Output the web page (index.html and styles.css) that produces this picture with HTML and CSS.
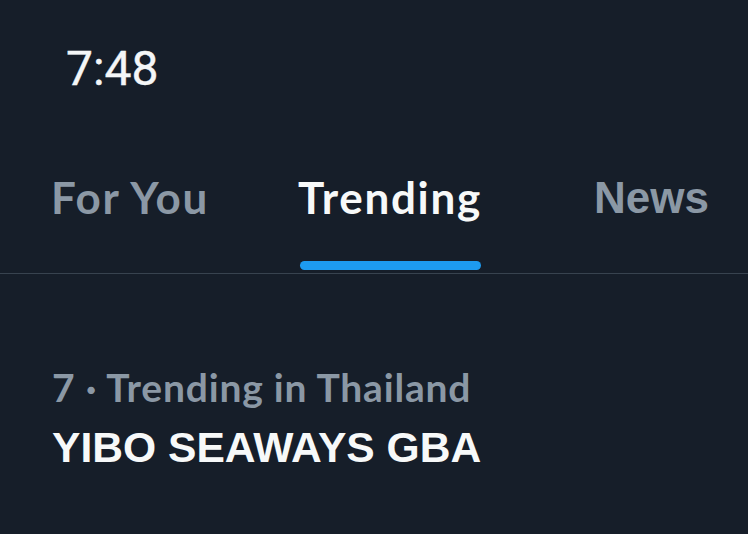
FILE: index.html
```html
<!DOCTYPE html>
<html lang="en">
<head>
<meta charset="utf-8">
<title>Trending</title>
<link rel="stylesheet" href="styles.css">
</head>
<body>
  <div class="screen">
    <header class="status-bar">
      <span class="clock">7:48</span>
    </header>
    <nav class="tabs">
      <div class="tab"><span class="tab-label">For You</span></div>
      <div class="tab tab-active"><span class="tab-label">Trending</span><span class="indicator"></span></div>
      <div class="tab tab-news"><span class="tab-label">News</span></div>
    </nav>
    <section class="trend">
      <div class="trend-meta">7 · Trending in Thailand</div>
      <div class="trend-title">YIBO SEAWAYS GBA</div>
    </section>
  </div>
</body>
</html>
```

FILE: styles.css
```css
html, body {
  margin: 0;
  padding: 0;
  background: #161e29;
}

.screen {
  width: 748px;
  height: 534px;
  overflow: hidden;
  background: #161e29;
  display: flex;
  flex-direction: column;
}

.status-bar {
  height: 140px;
  box-sizing: border-box;
  padding: 45px 0 0 66px;
}

.clock {
  font-family: Roboto, "Liberation Sans", sans-serif;
  font-weight: 400;
  font-size: 48px;
  line-height: 48px;
  color: #f4f6f7;
  -webkit-text-stroke: 0.4px #f4f6f7;
  display: block;
}

.tabs {
  display: flex;
  height: 134px;
  box-sizing: border-box;
  border-bottom: 1px solid #38434f;
}

.tab {
  flex: 0 0 260px;
  display: flex;
  flex-direction: column;
  align-items: center;
  padding-top: 35px;
  box-sizing: border-box;
}

.tab-label {
  font-family: Lato, "Noto Sans", sans-serif;
  font-weight: 700;
  font-size: 44px;
  line-height: 44px;
  letter-spacing: 1.7px;
  color: #8b98a5;
  white-space: nowrap;
}

.tab-active .tab-label {
  color: #f7f9f9;
}

.indicator {
  align-self: stretch;
  margin: 42px 39px 0 40px;
  height: 9px;
  border-radius: 5px;
  background: #1d9bf0;
}

.tab-news {
  padding-top: 36px;
  padding-left: 3px;
}

.tab-news .tab-label {
  font-family: "Liberation Sans", Arial, sans-serif;
  font-size: 44px;
  letter-spacing: 0;
}

.trend {
  padding: 94px 0 0 52px;
  display: flex;
  flex-direction: column;
  gap: 19px;
}

.trend-meta {
  font-family: Lato, "Noto Sans", sans-serif;
  font-weight: 700;
  font-size: 39px;
  line-height: 39px;
  letter-spacing: 0.8px;
  color: #8b98a5;
}

.trend-title {
  font-family: "Liberation Sans", Arial, sans-serif;
  font-weight: 700;
  font-size: 42.6px;
  line-height: 42px;
  color: #f7f9f9;
}
```
